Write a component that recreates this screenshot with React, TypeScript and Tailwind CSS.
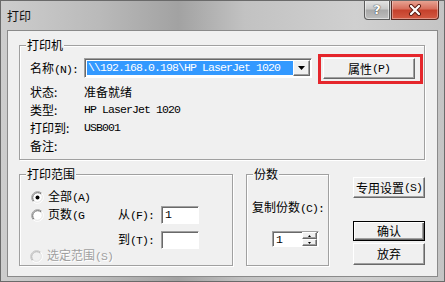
import React from "react";

const M = ({ children }: { children: React.ReactNode }) => (
  <span className="font-['Liberation_Mono',monospace] text-[11.5px] tracking-[-0.9px]">{children}</span>
);

const raised =
  "border border-t-white border-l-white border-r-[#696969] border-b-[#696969] shadow-[inset_-1px_-1px_0_#a0a0a0] bg-[#f0f0f0]";
const sunken =
  "border border-t-[#a0a0a0] border-l-[#a0a0a0] border-r-white border-b-white shadow-[inset_1px_1px_0_#696969] bg-white";
const group =
  "border border-[#a0a0a0] shadow-[inset_1px_1px_0_#fff,1px_1px_0_#fff] p-0 m-0 min-w-0";
const legend = "ml-[6px] px-[1px] bg-[#f0f0f0] leading-[14px]";

const Radio = ({ checked, disabled }: { checked?: boolean; disabled?: boolean }) => (
  <svg width="13" height="13" viewBox="0 0 13 13" className="shrink-0">
    <circle cx="6.5" cy="6.5" r="5.5" fill={disabled ? "#f0f0f0" : "#fff"} />
    <path d="M2.26 10.74 A6 6 0 0 1 10.74 2.26" fill="none" stroke={disabled ? "#c8c8c8" : "#a0a0a0"} />
    <path d="M10.74 2.26 A6 6 0 0 1 2.26 10.74" fill="none" stroke="#fff" />
    <path d="M2.97 10.03 A5 5 0 0 1 10.03 2.97" fill="none" stroke={disabled ? "#b4b4b4" : "#696969"} />
    <path d="M10.03 2.97 A5 5 0 0 1 2.97 10.03" fill="none" stroke="#e3e3e3" />
    {checked && <circle cx="6.5" cy="6.5" r="2" fill="#000" />}
  </svg>
);

const Button = ({ children, def, className }: { children: React.ReactNode; def?: boolean; className: string }) =>
  def ? (
    <div
      className={`flex items-center justify-center border border-black bg-[#f0f0f0] shadow-[inset_1px_1px_0_#fff,inset_-1px_-1px_0_#696969,inset_-2px_-2px_0_#a0a0a0] ${className}`}
    >
      {children}
    </div>
  ) : (
    <div className={`flex items-center justify-center ${raised} ${className}`}>{children}</div>
  );

export default function App() {
  return (
    <div className="w-[445px] h-[282px] flex flex-col bg-[linear-gradient(90deg,#cdcdcd_0%,#bababa_22%,#a2a2a2_40%,#c2c2c2_55%,#d0d0d0_80%,#c4c4c4_100%)] border border-[#6a6a6a] font-['Noto_Sans_CJK_SC',sans-serif] text-[12px] leading-[14px] text-black overflow-hidden">
      {/* Title bar */}
      <div className="h-[29px] flex items-start shrink-0">
        <div className="flex-1 pl-[6px] pt-[8px] text-[12px] text-[#111]">打印</div>
        <div className="flex gap-[1px] mr-[5px] -mt-px">
          <div className="w-[26px] h-[20px] rounded-bl-[4px] border border-t-0 border-[#5c5c5c] bg-[linear-gradient(180deg,#e6e6e6_0%,#c9c9c9_45%,#a9a9a9_55%,#bdbdbd_100%)] flex items-center justify-center shadow-[inset_0_0_0_1px_rgba(255,255,255,0.5)]">
            <span className="font-['DejaVu_Sans',sans-serif] font-bold text-[13px] leading-none text-white [text-shadow:0_0_1px_#333,0_0_1px_#333]">?</span>
          </div>
          <div className="w-[48px] h-[20px] rounded-br-[4px] border border-t-0 border-[#5a2a22] bg-[linear-gradient(180deg,#e9a999_0%,#d8705e_45%,#c5412c_55%,#d35a43_100%)] flex items-center justify-center shadow-[inset_0_0_0_1px_rgba(255,255,255,0.35)]">
            <svg width="14" height="12" viewBox="0 0 14 12">
              <path d="M3 2 L11 10 M11 2 L3 10" stroke="#5a1a10" strokeWidth="4" strokeLinecap="round" />
              <path d="M3 2 L11 10 M11 2 L3 10" stroke="#fff" strokeWidth="2.2" strokeLinecap="round" />
            </svg>
          </div>
        </div>
      </div>

      {/* Client area */}
      <div className="mx-[6px] h-[247px] border border-[#8a8a8a] bg-[#f0f0f0] pl-[11px] pt-[7px] shrink-0">
        {/* Printer group */}
        <fieldset className={`${group} w-[406px]`}>
          <legend className={legend}>打印机</legend>
          <div className="pl-[10px] pb-[4px]">
            <div className="flex items-start pt-[2px]">
              <div className="w-[54px] mt-[7px]">
                名称<M>(N):</M>
              </div>
              <div className={`${sunken} w-[228px] h-[20px] mt-[4px] flex items-center p-[2px]`}>
                <div className="flex-1 h-[14px] bg-[#3399ff] text-white flex items-center pl-[1px] overflow-hidden whitespace-nowrap">
                  <M>\\192.168.0.198\HP LaserJet 1020</M>
                </div>
                <div className={`${raised} w-[17px] h-[16px] -mr-px flex items-center justify-center`}>
                  <svg width="7" height="4" viewBox="0 0 7 4">
                    <path d="M0 0 H7 L3.5 4 Z" fill="#000" />
                  </svg>
                </div>
              </div>
              <div className="ml-[6px] w-[105px] h-[30px] border-[3px] border-[#e5262c] pl-[2px] pt-[1px]">
                <Button className="w-[92px] h-[21px]">
                  属性<M>(P)</M>
                </Button>
              </div>
            </div>
            <div className="-mt-px leading-[18px]">
              <div className="flex">
                <div className="w-[54px]">状态:</div>
                <div>准备就绪</div>
              </div>
              <div className="flex">
                <div className="w-[54px]">类型:</div>
                <M>HP LaserJet 1020</M>
              </div>
              <div className="flex">
                <div className="w-[54px]">打印到:</div>
                <M>USB001</M>
              </div>
              <div className="flex">
                <div className="w-[54px]">备注:</div>
              </div>
            </div>
          </div>
        </fieldset>

        {/* Lower section */}
        <div className="flex items-start mt-[7px]">
          {/* Print range */}
          <fieldset className={`${group} w-[214px] h-[99px]`}>
            <legend className={legend}>打印范围</legend>
            <div className="pl-[11px]">
              <div className="mt-[7px] h-[18px] flex items-center gap-[4px]">
                <Radio checked />
                <span>
                  全部<M>(A)</M>
                </span>
              </div>
              <div className="h-[18px] flex items-center">
                <div className="w-[87px] flex items-center gap-[4px]">
                  <Radio />
                  <span>
                    页数<M>(G</M>
                  </span>
                </div>
                <div className="w-[43px]">
                  从<M>(F):</M>
                </div>
                <div className={`${sunken} w-[38px] h-[18px] flex items-center pl-[3px]`}>
                  <M>1</M>
                </div>
              </div>
              <div className="mt-[7px] h-[18px] flex items-center pl-[87px]">
                <div className="w-[43px]">
                  到<M>(T):</M>
                </div>
                <div className={`${sunken} w-[38px] h-[18px]`} />
              </div>
              <div className="h-[14px] flex items-center gap-[4px] -ml-[1px] text-[#a0a0a0] [text-shadow:1px_1px_0_#fff]">
                <Radio disabled />
                <span>
                  选定范围<M>(S)</M>
                </span>
              </div>
            </div>
          </fieldset>

          {/* Copies */}
          <fieldset className={`${group} w-[83px] h-[99px] ml-[13px]`}>
            <legend className={legend}>份数</legend>
            <div className="pl-[5px]">
              <div className="mt-[19px] whitespace-nowrap">
                复制份数<M>(C):</M>
              </div>
              <div className={`${sunken} ml-[20px] mt-[15px] w-[47px] h-[16px] flex items-center`}>
                <div className="flex-1 pl-[3px] leading-[12px]">
                  <M>1</M>
                </div>
                <div className="w-[15px] h-full flex flex-col mr-px">
                  <div className={`${raised} flex-1 flex items-center justify-center`}>
                    <svg width="3" height="2" viewBox="0 0 3 2">
                      <path d="M0 2 H3 L1.5 0 Z" fill="#000" />
                    </svg>
                  </div>
                  <div className={`${raised} flex-1 flex items-center justify-center`}>
                    <svg width="3" height="2" viewBox="0 0 3 2">
                      <path d="M0 0 H3 L1.5 2 Z" fill="#000" />
                    </svg>
                  </div>
                </div>
              </div>
            </div>
          </fieldset>

          {/* Buttons */}
          <div className="ml-[24px] mt-[10px] w-[72px] flex flex-col">
            <Button className="h-[21px]">
              专用设置<M>(S)</M>
            </Button>
            <Button def className="h-[20px] mt-[23px]">
              确认
            </Button>
            <Button className="h-[22px] mt-[2px]">放弃</Button>
          </div>
        </div>
      </div>
    </div>
  );
}
